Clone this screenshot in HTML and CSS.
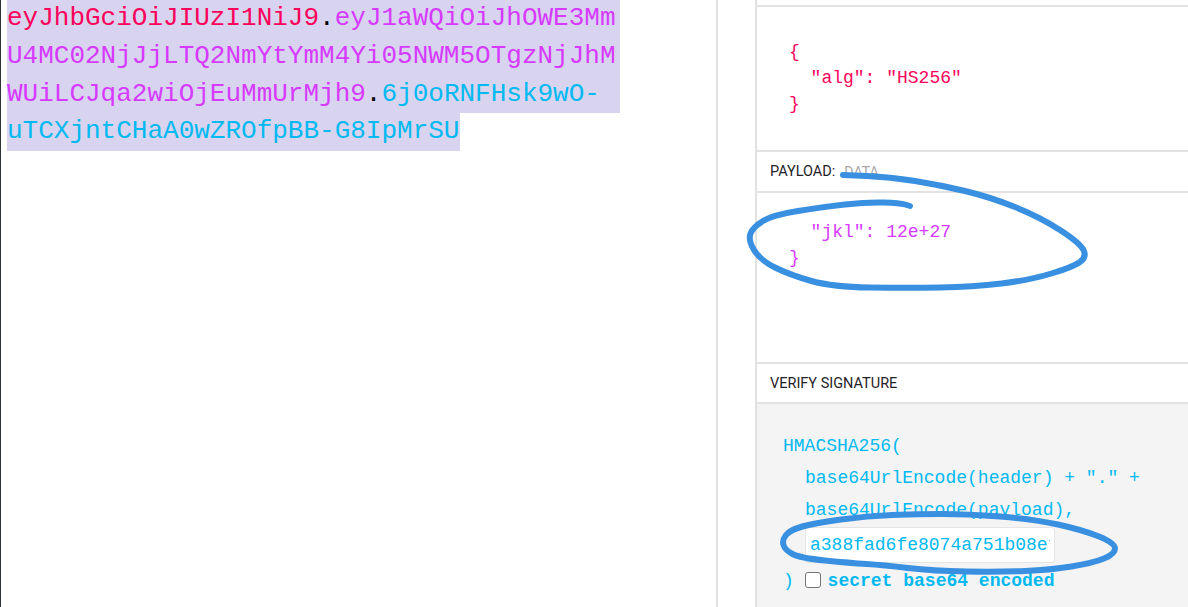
FILE: index.html
```html
<!DOCTYPE html>
<html lang="en">
<head>
    <meta charset="UTF-8">
    <meta name="viewport" content="width=device-width, initial-scale=1.0">
    <title>JWT Debugger</title>
    <link rel="stylesheet" href="styles.css">
</head>
<body>
    <!-- Encoded token -->
    <div class="encoded">
        <div class="token">
            <div class="line"><span class="t-header">eyJhbGciOiJIUzI1NiJ9</span><span class="t-dot">.</span><span class="t-payload">eyJ1aWQiOiJhOWE3Mm</span></div>
            <div class="line"><span class="t-payload">U4MC02NjJjLTQ2NmYtYmM4Yi05NWM5OTgzNjJhM</span></div>
            <div class="line"><span class="t-payload">WUiLCJqa2wiOjEuMmUrMjh9</span><span class="t-dot">.</span><span class="t-sig">6j0oRNFHsk9wO-</span></div>
            <div class="line last"><span class="t-sig">uTCXjntCHaA0wZROfpBB-G8IpMrSU</span></div>
        </div>
    </div>

    <!-- Decoded panels -->
    <div class="decoded">
        <div class="pane-top"></div>
        <div class="code-box header-box">
            <pre class="json header-json">{
  "alg": "HS256"
}</pre>
        </div>
        <div class="pane-label">PAYLOAD:<span class="sub">DATA</span></div>
        <div class="code-box payload-box">
            <pre class="json payload-json">  "jkl": 12e+27
}</pre>
        </div>
        <div class="pane-label verify-label">VERIFY SIGNATURE</div>
        <div class="signature">
            <div class="sig-line">HMACSHA256(</div>
            <div class="sig-line indent">base64UrlEncode(header) + "." +</div>
            <div class="sig-line indent">base64UrlEncode(payload),</div>
            <div class="indent">
                <input type="text" class="secret-input" value="a388fad6fe8074a751b08ef3c19d">
            </div>
            <div class="sig-line">) <input type="checkbox" class="b64-check"><b>secret base64 encoded</b></div>
        </div>
    </div>

    <!-- hand drawn marks on top of the screenshot -->
    <svg class="scribble" width="1188" height="607" viewBox="0 0 1188 607">
        <path d="M843 175 L866.5 176 Q890 177 915 181 Q940 185 965 191 Q990 197 1015 207 Q1040 217 1060 230 Q1080 243 1083.5 250 Q1087 257 1080 262 Q1073 267 1051.5 273.5 Q1030 280 1001.5 283.5 Q973 287 940 287.5 Q907 288 870 287.5 Q833 287 811.5 281 Q790 275 775 267.5 Q760 260 754 250 Q748 240 750.5 233.5 Q753 227 763 221 Q773 215 798 211 Q823 207 845 204.5 Q867 202 883.5 202.5 Q900 203 905 204.5 L910 206"/>
        <path d="M786 535 Q790 530 802.5 526.5 Q815 523 841 519.5 Q867 516 892 515 Q917 514 942 514 Q967 514 1000 516.5 Q1033 519 1058 524.5 Q1083 530 1099 536.5 Q1115 543 1115 548.5 Q1115 554 1104 558.5 Q1093 563 1071.5 566.5 Q1050 570 1025 571 Q1000 572 966.5 571.5 Q933 571 908 568 Q883 565 866.5 564 Q850 563 825 560.5 Q800 558 792.5 554 Q785 550 783.5 545 Q782 540 786 535 Q790 530 803 526"/>
    </svg>
</body>
</html>
```

FILE: styles.css
```css
* {
    margin: 0;
    padding: 0;
    box-sizing: border-box;
}

body {
    position: relative;
    display: flex;
    height: 607px;
    overflow: hidden;
    background: #fff;
    border-left: 1px solid #2e3338;
    font-family: 'Roboto', 'Liberation Sans', sans-serif;
    color: #222;
}

/* Encoded side */
.encoded {
    width: 717px;
    flex: none;
    padding-left: 6px;
    border-right: 2px solid #e2e2e2;
    margin-right: 37px;
}

.token {
    width: 613px;
    font-family: 'Liberation Mono', 'DejaVu Sans Mono', monospace;
    font-size: 26px;
    line-height: 37.75px;
    white-space: nowrap;
}

.token .line {
    background: #d8d4ef;
}

.token .line.last {
    width: fit-content;
    padding-right: 1px;
}

.t-header { color: #fb015b; }
.t-payload { color: #d63aff; }
.t-sig { color: #00b9f1; }
.t-dot { color: #000; }

/* Decoded side */
.decoded {
    flex: 1;
    min-width: 0;
    border-left: 2px solid #e2e2e2;
}

.pane-top {
    height: 5px;
}

.code-box {
    border-top: 2px solid #e2e2e2;
}

.header-box {
    height: 145px;
    padding: 32px 0 0 32px;
}

.payload-box {
    height: 171px;
    padding: 26px 0 0 32px;
}

.json {
    font-family: 'Liberation Mono', 'DejaVu Sans Mono', monospace;
    font-size: 18px;
    line-height: 26px;
}

.header-json { color: #fb015b; }
.payload-json { color: #d63aff; }

.pane-label {
    display: flex;
    align-items: center;
    height: 41px;
    padding-left: 13px;
    border-top: 2px solid #e2e2e2;
    font-size: 14.5px;
    color: #1f2328;
}

.verify-label {
    height: 40px;
}

.pane-label .sub {
    margin-left: 9px;
    font-size: 14px;
    color: #a8a8a8;
}

.signature {
    height: 210px;
    padding: 26px 0 0 26px;
    border-top: 2px solid #e2e2e2;
    background: #f4f4f4;
    font-family: 'Liberation Mono', 'DejaVu Sans Mono', monospace;
    font-size: 18px;
    color: #00b9f1;
}

.sig-line {
    line-height: 32px;
    white-space: pre;
}

.indent {
    padding-left: 22px;
}

.secret-input {
    display: block;
    width: 250px;
    height: 36px;
    margin: 1px 0 2px;
    padding: 0 4px;
    border: 1px solid #e4e4e4;
    border-radius: 3px;
    background: #fff;
    font-family: 'Liberation Mono', 'DejaVu Sans Mono', monospace;
    font-size: 18px;
    color: #00b9f1;
    outline: none;
}

.b64-check {
    appearance: none;
    width: 16px;
    height: 16px;
    margin: 0 7px 0 0;
    border: 1.5px solid #777;
    border-radius: 3px;
    background: #fff;
    vertical-align: -2px;
}

.signature b {
    font-weight: 700;
}

/* blue pen marks */
.scribble {
    position: absolute;
    top: 0;
    left: -1px;
    pointer-events: none;
}

.scribble path {
    fill: none;
    stroke: #3990e0;
    stroke-width: 6;
    stroke-linecap: round;
    stroke-linejoin: round;
}
```
